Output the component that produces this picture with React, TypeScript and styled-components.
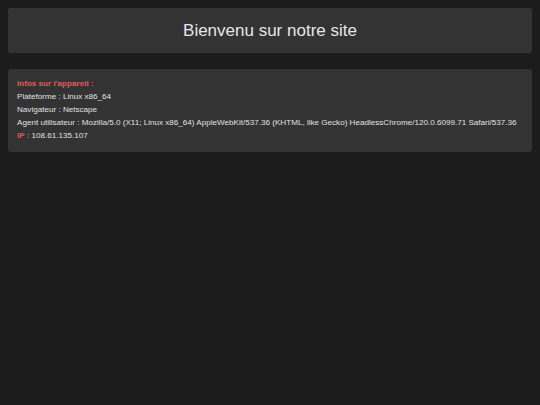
import React from "react";
import styled, { createGlobalStyle } from "styled-components";

const Global = createGlobalStyle`
  html, body { margin: 0; padding: 0; background: #1c1c1c; }
  body { font-family: "Liberation Sans", Arial, sans-serif; color: #e0e0e0; }
`;

const Page = styled.div`
  padding: 8px;
  display: flex;
  flex-direction: column;
  gap: 16px;
`;

const Header = styled.header`
  background: #333333;
  height: 45px;
  display: flex;
  align-items: center;
  justify-content: center;
  border-radius: 2px;
`;

const Title = styled.h1`
  margin: 0;
  font-size: 17px;
  font-weight: normal;
  color: #e6e6e6;
`;

const InfoBox = styled.section`
  background: #333333;
  border-radius: 3px;
  padding: 9px 9px 9px;
  display: flex;
  flex-direction: column;
  font-size: 8.1px;
  line-height: 12.9px;
  color: #e0e0e0;
`;

const Line = styled.div``;

const Label = styled.span`
  color: #e05a5a;
  font-weight: bold;
`;

export default function App() {
  return (
    <>
      <Global />
      <Page>
        <Header>
          <Title>Bienvenu sur notre site</Title>
        </Header>
        <InfoBox>
          <Line>
            <Label>Infos sur l'appareil :</Label>
          </Line>
          <Line>Plateforme : Linux x86_64</Line>
          <Line>Navigateur : Netscape</Line>
          <Line>
            Agent utilisateur : Mozilla/5.0 (X11; Linux x86_64) AppleWebKit/537.36 (KHTML, like Gecko) HeadlessChrome/120.0.6099.71 Safari/537.36
          </Line>
          <Line>
            <Label>IP</Label> : 108.61.135.107
          </Line>
        </InfoBox>
      </Page>
    </>
  );
}
